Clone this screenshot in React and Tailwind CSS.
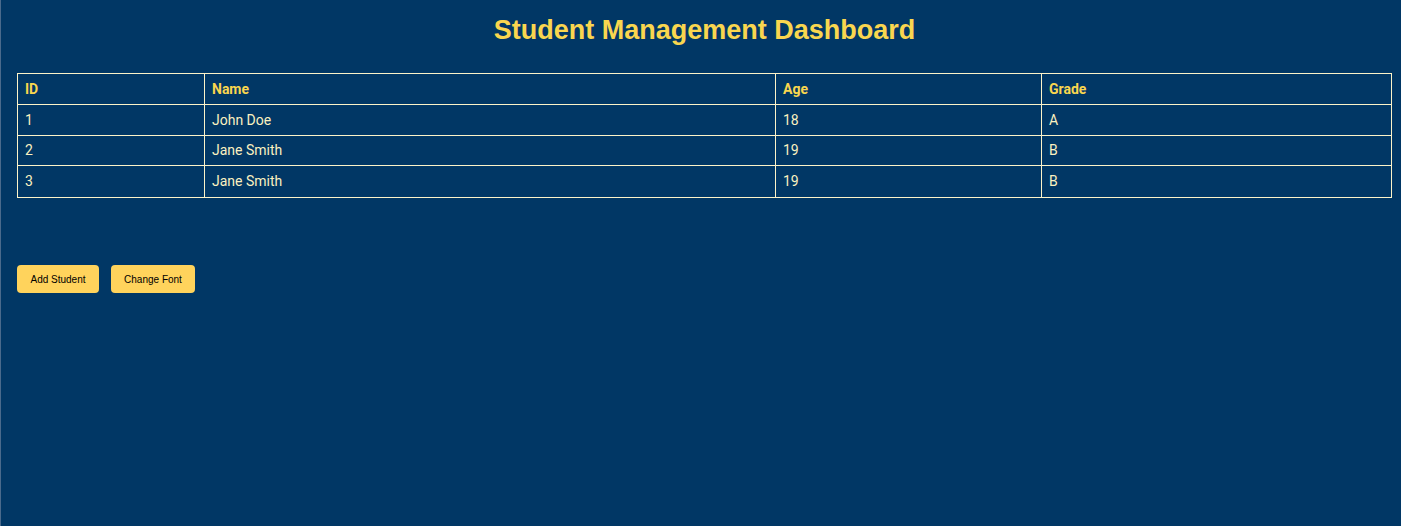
import React, { useState } from "react";

const initialStudents = [
   { id: 1, name: "John Doe", age: 18, grade: "A" },
   { id: 2, name: "Jane Smith", age: 19, grade: "B" },
   { id: 3, name: "Jane Smith", age: 19, grade: "B" },
];

const rowHeights = ["h-[31px]", "h-[30px]", "h-[32px]"];

const App = () => {
   const [students] = useState(initialStudents);

   return (
      <div className="min-h-screen bg-[#013765] border-l border-[#4a6a8c] pl-4 pr-[9px] pt-[14px] font-['Roboto',sans-serif]">
         <h1 className="text-center text-[27px] leading-[32px] font-bold text-[#f9d64f] font-['Liberation_Sans',Arial,sans-serif]">
            Student Management Dashboard
         </h1>

         <table className="mt-[27px] w-full border-collapse text-[14px] text-[#fbf1c0]">
            <thead>
               <tr className="h-[31px]">
                  <th className="w-[187px] border border-[#fdf3c8] px-[7px] text-left font-bold text-[#f9d64f]">ID</th>
                  <th className="w-[571px] border border-[#fdf3c8] px-[7px] text-left font-bold text-[#f9d64f]">Name</th>
                  <th className="w-[266px] border border-[#fdf3c8] px-[7px] text-left font-bold text-[#f9d64f]">Age</th>
                  <th className="border border-[#fdf3c8] px-[7px] text-left font-bold text-[#f9d64f]">Grade</th>
               </tr>
            </thead>
            <tbody>
               {students.map((s, i) => (
                  <tr key={i} className={rowHeights[i]}>
                     <td className="border border-[#fdf3c8] px-[7px]">{s.id}</td>
                     <td className="border border-[#fdf3c8] px-[7px]">{s.name}</td>
                     <td className="border border-[#fdf3c8] px-[7px]">{s.age}</td>
                     <td className="border border-[#fdf3c8] px-[7px]">{s.grade}</td>
                  </tr>
               ))}
            </tbody>
         </table>

         <div className="mt-[67px] flex gap-3">
            <button className="h-[28px] w-[82px] rounded-[4px] bg-[#ffd35c] text-[10px] text-black font-['Liberation_Sans',Arial,sans-serif]">
               Add Student
            </button>
            <button className="h-[28px] w-[84px] rounded-[4px] bg-[#ffd35c] text-[10px] text-black font-['Liberation_Sans',Arial,sans-serif]">
               Change Font
            </button>
         </div>
      </div>
   );
};

export default App;
